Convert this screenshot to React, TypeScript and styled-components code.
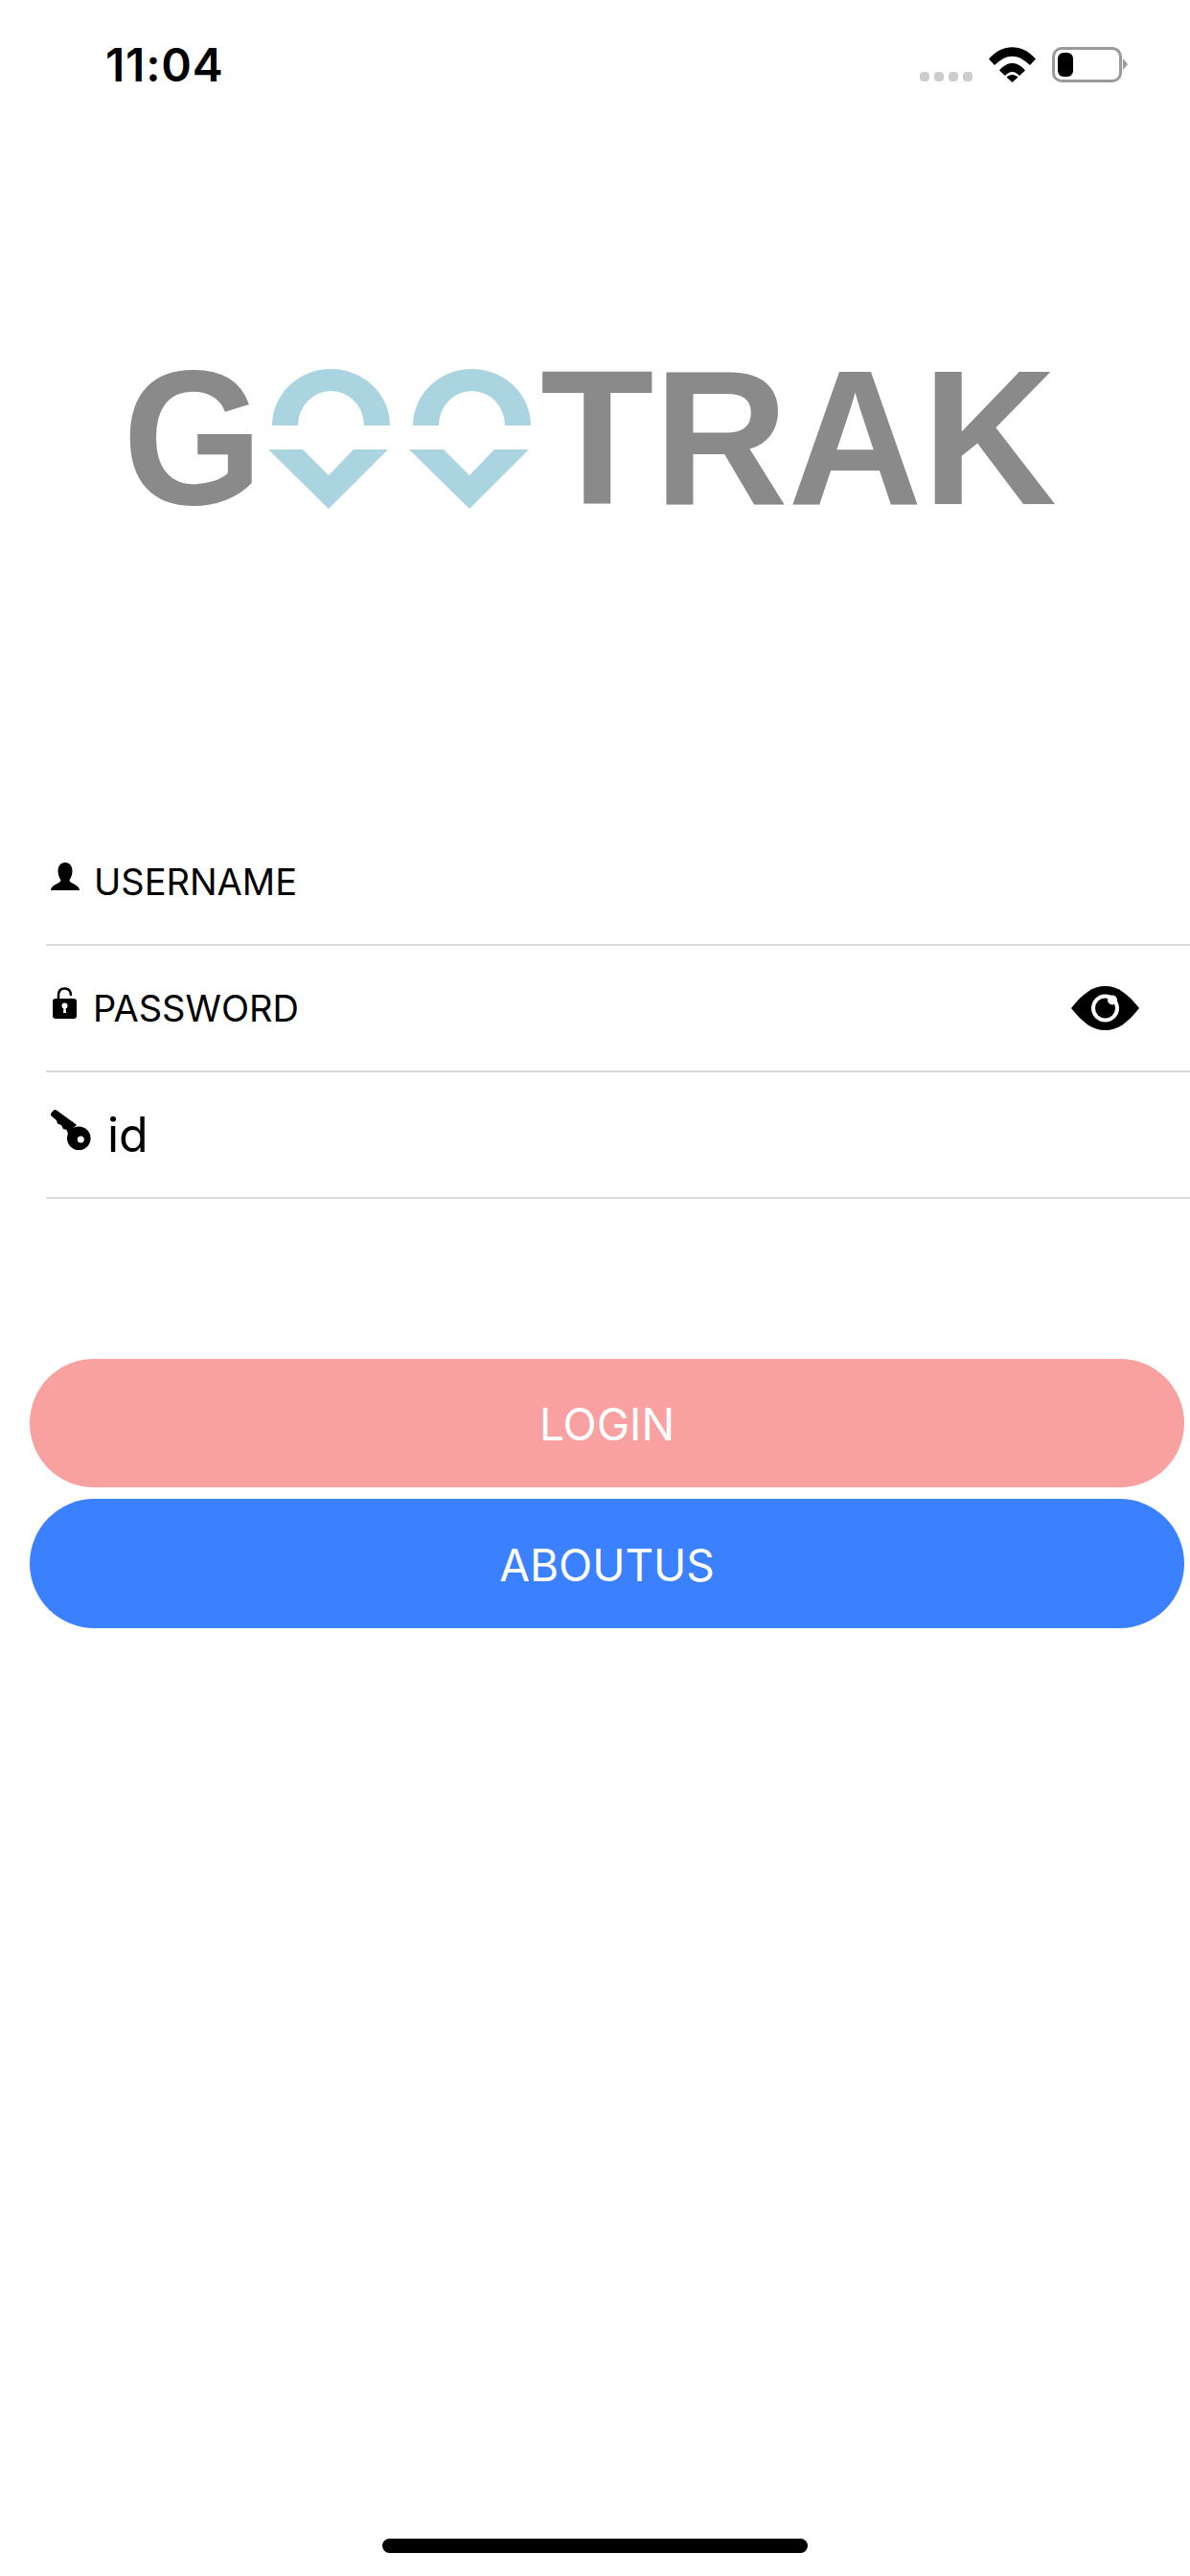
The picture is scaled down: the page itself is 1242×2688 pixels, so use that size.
import React from 'react'
import styled, { createGlobalStyle } from 'styled-components'

const GlobalStyle = createGlobalStyle`
  html, body {
    margin: 0;
    padding: 0;
    background: #fff;
  }
  * {
    box-sizing: border-box;
  }
`

const Page = styled.div`
  width: 1242px;
  min-height: 2688px;
  display: flex;
  flex-direction: column;
  font-family: Inter, 'Liberation Sans', sans-serif;
  color: #000;
  background: #fff;
  overflow: hidden;
`

const StatusBar = styled.div`
  height: 135px;
  padding: 0 71px 0 110px;
  display: flex;
  align-items: center;
  justify-content: space-between;
`

const Time = styled.span`
  font-size: 48px;
  font-weight: 600;
  line-height: 1;
  letter-spacing: 0.8px;
`

const StatusIcons = styled.div`
  display: flex;
  align-items: flex-end;
`

const SignalDots = styled.div`
  display: flex;
  gap: 5px;
  margin-right: 17px;
  margin-bottom: 1px;
`

const Dot = styled.span`
  width: 10px;
  height: 10px;
  border-radius: 4px;
  background: #cdcdcd;
`

const Battery = styled.div`
  position: relative;
  width: 73px;
  height: 37px;
  margin-left: 17px;
  padding: 3px;
  border: 3px solid #9a9a9a;
  border-radius: 10px;

  &::after {
    content: '';
    position: absolute;
    right: -9px;
    top: 9px;
    border-left: 5px solid #9a9a9a;
    border-top: 6px solid transparent;
    border-bottom: 6px solid transparent;
  }
`

const BatteryLevel = styled.div`
  width: 16px;
  height: 25px;
  border-radius: 6px;
  background: #000;
`

const Logo = styled.div`
  margin-top: 247px;
  height: 150px;
  padding-left: 128px;
  display: flex;
  align-items: flex-start;
  font-family: 'Liberation Sans', Arial, sans-serif;
  font-weight: 700;
  font-size: 200px;
  line-height: 150px;
  color: #8a8a8a;
`

const LogoWord = styled.span<{ $width: number; $gap?: number; $squeeze: number }>`
  display: block;
  width: ${(p) => p.$width}px;
  margin-left: ${(p) => p.$gap ?? 0}px;
  transform: scaleX(${(p) => p.$squeeze});
  transform-origin: left center;
  white-space: nowrap;
`

const Form = styled.div`
  margin-top: 323px;
  margin-left: 48px;
`

const Field = styled.div`
  height: 132px;
  padding: 0 53px 0 5px;
  display: flex;
  align-items: center;
  border-bottom: 2px solid #dcdcdc;
`

const FieldIcon = styled.span<{ $width: number; $inset?: number }>`
  width: ${(p) => p.$width}px;
  padding-left: ${(p) => p.$inset ?? 0}px;
  margin-bottom: 12px;
  display: flex;
`

const Label = styled.span<{ $large?: boolean }>`
  font-size: ${(p) => (p.$large ? 50 : 38)}px;
  line-height: 1;
`

const EyeButton = styled.span`
  margin-left: auto;
  display: flex;
`

const Actions = styled.div`
  margin: 167px 0 0 31px;
  width: 1205px;
  display: flex;
  flex-direction: column;
  gap: 12px;
`

const Button = styled.div<{ $color: string; $height: number }>`
  height: ${(p) => p.$height}px;
  padding-top: 2px;
  border-radius: 68px;
  background: ${(p) => p.$color};
  color: #fff;
  font-size: 46px;
  display: flex;
  align-items: center;
  justify-content: center;
`

const HomeIndicator = styled.div`
  width: 444px;
  height: 15px;
  margin: auto auto 24px;
  border-radius: 8px;
  background: #000;
`

const WifiIcon = () => (
  <svg width="49" height="37" viewBox="0 0 49 37">
    <path d="M0 12.500C14-4 35-4 49 12.500L43 19C30 6.500 19 6.500 6 19Z" fill="#000" />
    <path d="M11 24.500C19 14.500 30 14.500 38 24.500L32 30C27 24.500 22 24.500 17 30Z" fill="#000" />
    <path d="M24.500 37L18.500 31.500C22 28 27 28 30.500 31.500Z" fill="#000" />
  </svg>
)

const LogoPins = () => (
  <svg width="275" height="150" viewBox="0 0 275 150">
    {[0, 147].map((x) => (
      <g key={x} transform={`translate(${x} 0)`} fill="#abd4e1">
        <path d="M4 62A61.500 59 0 0 1 127 62H100A34.500 36 0 0 0 31 62Z" />
        <path d="M0 87H36L63 114L89 87H125L63 149Z" />
      </g>
    ))}
  </svg>
)

const UserIcon = () => (
  <svg width="30" height="29" viewBox="0 0 30 29">
    <path
      d="M15 0C20 0 22.500 4 22.500 9C22.500 13 21 16 19.500 18.500C19.500 22 30 23 30 29H0C0 23 10.500 22 10.500 18.500C9 16 7.500 13 7.500 9C7.500 4 10 0 15 0Z"
      fill="#000"
    />
  </svg>
)

const LockIcon = () => (
  <svg width="25" height="33" viewBox="0 0 25 33">
    <path d="M6 14V8.500C6 4 8.500 1.500 12.500 1.500C16.500 1.500 19 4 19 9" fill="none" stroke="#000" strokeWidth="2.500" />
    <rect x="0" y="12" width="25" height="21" rx="3" fill="#000" />
    <circle cx="12.500" cy="19.500" r="3" fill="#fff" />
    <path d="M11.500 20.500H13.500L14 27H11Z" fill="#fff" />
  </svg>
)

const KeyIcon = () => (
  <svg width="42" height="43" viewBox="0 0 42 43">
    <path
      d="M0 5L3 1.500C4 .6 5 .8 6 1.500L27 16.700L18 26L16.500 22L13 21L11 17L7 15.500L6 12L0 7Z"
      fill="#000"
    />
    <circle cx="29.300" cy="30.700" r="12.300" fill="#000" />
    <circle cx="31.300" cy="32" r="3.500" fill="#fff" />
  </svg>
)

const EyeIcon = () => (
  <svg width="71" height="46" viewBox="0 0 71 46">
    <path d="M0 23C12 8 22 0 35.500 0C49 0 59 8 71 23C59 38 49 46 35.500 46C22 46 12 38 0 23Z" fill="#000" />
    <circle cx="35.500" cy="23" r="14.500" fill="#fff" />
    <circle cx="35.500" cy="23" r="10.500" fill="#000" />
    <circle cx="43" cy="14.500" r="5" fill="#fff" />
  </svg>
)

const App: React.FC = () => {
  return (
    <Page>
      <GlobalStyle />
      <StatusBar>
        <Time>11:04</Time>
        <StatusIcons>
          <SignalDots>
            <Dot />
            <Dot />
            <Dot />
            <Dot />
          </SignalDots>
          <WifiIcon />
          <Battery>
            <BatteryLevel />
          </Battery>
        </StatusIcons>
      </StatusBar>
      <Logo>
        <LogoWord $width={152} $squeeze={0.94}>G</LogoWord>
        <LogoPins />
        <LogoWord $width={560} $gap={9} $squeeze={0.97}>TRAK</LogoWord>
      </Logo>
      <Form>
        <Field>
          <FieldIcon $width={45}>
            <UserIcon />
          </FieldIcon>
          <Label>USERNAME</Label>
        </Field>
        <Field>
          <FieldIcon $width={44} $inset={2}>
            <LockIcon />
          </FieldIcon>
          <Label>PASSWORD</Label>
          <EyeButton>
            <EyeIcon />
          </EyeButton>
        </Field>
        <Field>
          <FieldIcon $width={59}>
            <KeyIcon />
          </FieldIcon>
          <Label $large>id</Label>
        </Field>
      </Form>
      <Actions>
        <Button $color="#f9a0a0" $height={134}>LOGIN</Button>
        <Button $color="#3a80ff" $height={135}>ABOUTUS</Button>
      </Actions>
      <HomeIndicator />
    </Page>
  )
}

export default App
